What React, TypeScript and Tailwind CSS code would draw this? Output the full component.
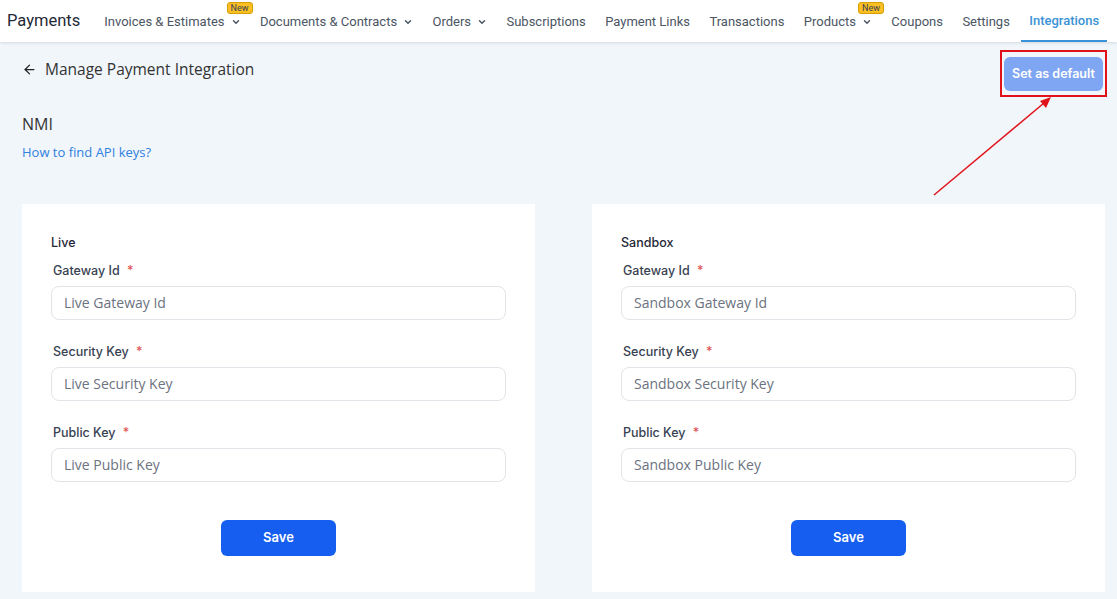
import { ChevronDown, ArrowLeft } from 'lucide-react'

const navItems = [
  { label: 'Invoices & Estimates', caret: true, badge: true },
  { label: 'Documents & Contracts', caret: true },
  { label: 'Orders', caret: true },
  { label: 'Subscriptions' },
  { label: 'Payment Links' },
  { label: 'Transactions' },
  { label: 'Products', caret: true, badge: true },
  { label: 'Coupons' },
  { label: 'Settings' },
  { label: 'Integrations', active: true },
]

function Field({ label, placeholder }: { label: string; placeholder: string }) {
  return (
    <div className="flex flex-col">
      <label className="ml-[2px] text-[12.5px] font-medium text-[#374151] font-['Inter',sans-serif] leading-[20px]">
        {label} <span className="ml-1 text-[#e05252]">*</span>
      </label>
      <input
        placeholder={placeholder}
        className="mt-[5px] h-[34px] w-full rounded-lg border border-[#e1e4e8] bg-white px-3 text-[14px] text-[#374151] placeholder:text-[#6b7280] font-['Open_Sans',sans-serif] outline-none"
      />
    </div>
  )
}

function Card({ title, prefix }: { title: string; prefix: string }) {
  return (
    <div className="flex-1 bg-white pt-[32px] pl-[29px] pr-[29px] pb-[36px]">
      <div className="text-[12.5px] font-medium text-[#1f2937] font-['Inter',sans-serif] leading-[14px]">{title}</div>
      <div className="mt-[11px] flex flex-col gap-[22px]">
        <Field label="Gateway Id" placeholder={`${prefix} Gateway Id`} />
        <Field label="Security Key" placeholder={`${prefix} Security Key`} />
        <Field label="Public Key" placeholder={`${prefix} Public Key`} />
      </div>
      <div className="mt-[38px] flex justify-center">
        <button className="h-[36px] w-[115px] rounded-md bg-[#155eef] text-[13px] font-semibold text-white font-['Inter',sans-serif]">
          Save
        </button>
      </div>
    </div>
  )
}

export default function App() {
  return (
    <div className="relative min-h-[599px] w-full overflow-hidden bg-[#f1f6fa]">
      <header className="flex h-[42px] items-center bg-white pl-[7px] shadow-[0_1px_3px_rgba(0,0,0,0.12)] font-['Roboto',sans-serif]">
        <div className="mr-[24px] text-[16.5px] text-[#1f2937] leading-none">Payments</div>
        <nav className="flex h-full items-center gap-[19.4px]">
          {navItems.map((it) => (
            <div
              key={it.label}
              className={`relative flex h-full items-center whitespace-nowrap pt-[1px] text-[13px] ${
                it.active ? '-ml-[8px] border-b-2 border-[#3a93d6] px-[8px] text-[#3a93d6] font-medium' : 'text-[#4b5563]'
              }`}
            >
              <span>{it.label}</span>
              {it.caret && <ChevronDown className="ml-[6px] h-[10px] w-[10px]" strokeWidth={3.5} />}
              {it.badge && (
                <span className="absolute right-[-12px] top-[2px] rounded-[3px] border border-[#d69e00] bg-[#fbbf24] px-[3px] text-[9px] leading-[10px] text-[#374151]">
                  New
                </span>
              )}
            </div>
          ))}
        </nav>
      </header>

      <main className="pl-[22px] pr-[10px] font-['Open_Sans',sans-serif]">
        <div className="flex items-start justify-between">
          <div className="mt-[16px] flex items-center gap-[8px] text-[#333]">
            <ArrowLeft className="h-[15px] w-[15px] text-[#222]" strokeWidth={2} />
            <span className="text-[15.5px]">Manage Payment Integration</span>
          </div>
          <div className="mt-[8px] border-2 border-[#e0131b] px-[2px] pt-[5px] pb-[4px]">
            <button className="h-[34px] w-[99px] rounded-md bg-[#7fa6f3] text-[12.5px] font-semibold text-white font-['Inter',sans-serif]">
              Set as default
            </button>
          </div>
        </div>
        <div className="mt-[19px] text-[16px] text-[#333] leading-none">NMI</div>
        <div className="mt-[11px] text-[13px] text-[#2f80e0]">How to find API keys?</div>

        <div className="mt-[41px] mr-[2px] flex gap-[57px]">
          <Card title="Live" prefix="Live" />
          <Card title="Sandbox" prefix="Sandbox" />
        </div>
      </main>

      <svg className="pointer-events-none absolute left-0 top-0" width="1117" height="599">
        <line x1="934" y1="195" x2="1044" y2="103" stroke="#e0131b" strokeWidth="1.5" />
        <polygon points="1051,97 1046,108 1040,101" fill="#e0131b" />
      </svg>
    </div>
  )
}
